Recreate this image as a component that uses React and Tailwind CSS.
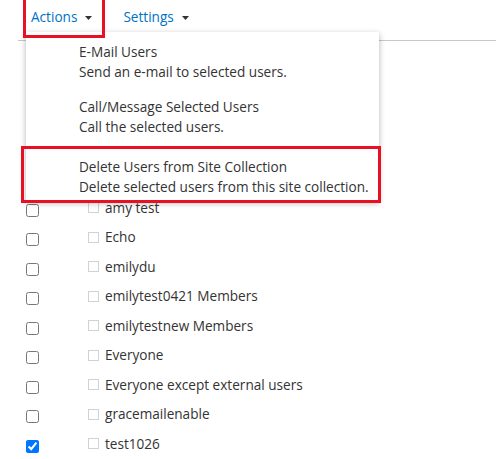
import React from "react";

const users = [
  { name: "amy test", checked: false },
  { name: "Echo", checked: false },
  { name: "emilydu", checked: false },
  { name: "emilytest0421 Members", checked: false },
  { name: "emilytestnew Members", checked: false },
  { name: "Everyone", checked: false },
  { name: "Everyone except external users", checked: false },
  { name: "gracemailenable", checked: false },
  { name: "test1026", checked: true },
];

function Caret() {
  return (
    <svg width="7" height="4" viewBox="0 0 7 4" className="ml-[8px] mt-[2px]">
      <path d="M0 0h7L3.5 4z" fill="#333" />
    </svg>
  );
}

export default function App() {
  return (
    <div
      className="relative w-[496px] h-[459px] bg-white overflow-hidden text-[13.6px] text-[#333]"
      style={{ fontFamily: '"Open Sans", "Noto Sans", sans-serif' }}
    >
      {/* top nav */}
      <div className="flex items-start h-[41px] border-b border-[#c8c8c8] ml-[18px] pl-[13px] pt-[7px]">
        <div className="flex items-center text-[#0072c6] leading-[20px]">
          Actions
          <Caret />
        </div>
        <div className="flex items-center text-[#0072c6] leading-[20px] ml-[31px]">
          Settings
          <Caret />
        </div>
      </div>

      {/* list */}
      <div className="flex flex-col pt-[152px] pl-[26px]">
        {users.map((u) => (
          <div key={u.name} className="flex items-center h-[29.5px]">
            <input
              type="checkbox"
              defaultChecked={u.checked}
              className="m-0 w-[13px] h-[13px] mt-[5px] accent-[#0075ff]"
            />
            <div className="ml-[49px] w-[11px] h-[11px] border border-[#d2d2d2] bg-white" />
            <span className="ml-[6px] leading-[20px]">{u.name}</span>
          </div>
        ))}
      </div>

      {/* dropdown menu */}
      <div className="absolute left-[26px] top-[32px] w-[353px] bg-white shadow-[0_2px_6px_rgba(0,0,0,0.3)] pt-[10px] pb-[4px] leading-[20px]">
        <div className="pl-[53px]">
          <div>E-Mail Users</div>
          <div>Send an e-mail to selected users.</div>
        </div>
        <div className="pl-[53px] mt-[15px]">
          <div>Call/Message Selected Users</div>
          <div>Call the selected users.</div>
        </div>
        <div className="pl-[53px] mt-[20px]">
          <div>Delete Users from Site Collection</div>
          <div>Delete selected users from this site collection.</div>
        </div>
      </div>

      {/* highlight boxes */}
      <div className="absolute left-[23px] top-[-3px] w-[82px] h-[41px] border-[3px] border-[#e81123]" />
      <div className="absolute left-[21px] top-[146px] w-[360px] h-[57px] border-[3px] border-[#e81123]" />
    </div>
  );
}
